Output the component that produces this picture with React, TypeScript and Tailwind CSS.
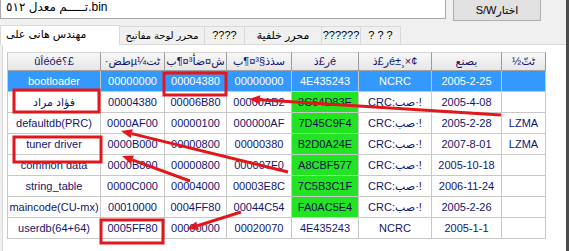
import React from 'react'

type Row = {
    name: string
    start: string
    size: string
    len: string
    crc: string
    flag: string
    date: string
    pack: string
    green: boolean
    selected?: boolean
}

const rows: Row[] = [
    { name: 'bootloader', start: '00000000', size: '00004380', len: '00000000', crc: '4E435243', flag: 'NCRC', date: '2005-2-25', pack: '', green: false, selected: true },
    { name: 'فؤاد مراد', start: '00004380', size: '00006B80', len: '00000AB2', crc: '3C64D83E', flag: 'CRC', date: '2005-4-08', pack: '', green: true },
    { name: 'defaultdb(PRC)', start: '0000AF00', size: '00000100', len: '000000AF', crc: '7D45C9F4', flag: 'CRC', date: '2005-2-28', pack: 'LZMA', green: true },
    { name: 'tuner driver', start: '0000B000', size: '00000800', len: '00000380', crc: 'B2D0A24E', flag: 'CRC', date: '2007-8-01', pack: 'LZMA', green: true },
    { name: 'common data', start: '0000B800', size: '00000800', len: '000007F0', crc: 'A8CBF577', flag: 'CRC', date: '2005-10-18', pack: '', green: true },
    { name: 'string_table', start: '0000C000', size: '00004000', len: '00003E8C', crc: '7C5B3C1F', flag: 'CRC', date: '2006-11-24', pack: '', green: true },
    { name: 'maincode(CU-mx)', start: '00010000', size: '0004FF80', len: '00044C54', crc: 'FA0AC5E4', flag: 'CRC', date: '2005-2-26', pack: '', green: true },
    { name: 'userdb(64+64)', start: '0005FF80', size: '00000000', len: '00020070', crc: '4E435243', flag: 'NCRC', date: '2005-1-1', pack: '', green: false },
]

// garbled column titles, kept as the app shows them
const headers = ['ûÎéóé؟£', '·طضµ¼ٹت', 'ش¤ضأ³¤¶ب', 'سذذ§³¤¶ب', 'ر£ذé', 'ر£ذé±¸×¢', 'بصنع', '½ٹتّ']

const tabs = [
    { t: 'محرر لوحة مفاتيح', w: 'w-[85px] text-[10px]' },
    { t: '????', w: 'w-[40px] text-[11px]' },
    { t: 'محرر خلفية', w: 'w-[77px] text-[11px]' },
    { t: '??????', w: 'w-[39px] text-[11px]' },
    { t: '? ? ?', w: 'w-[40px] text-[11px]' },
]

function Cell({ children, row, green }: { children: React.ReactNode; row: Row; green?: boolean }) {
    const bg = row.selected ? 'bg-[#3399ff] text-white' : green ? 'bg-[#22e422] text-[#10104a]' : 'bg-white text-[#14146e]'
    return (
        <div className={`h-[21px] flex items-center justify-center whitespace-nowrap overflow-hidden border-r border-b border-[#c8c8c8] ${bg}`}>
            {children}
        </div>
    )
}

function Arrow({ x1, y1, x2, y2 }: { x1: number; y1: number; x2: number; y2: number }) {
    // head at (x2, y2)
    const a = Math.atan2(y2 - y1, x2 - x1)
    const len = 11
    const w = 4.5
    const bx = x2 - len * Math.cos(a)
    const by = y2 - len * Math.sin(a)
    const p1 = `${bx + w * Math.sin(a)},${by - w * Math.cos(a)}`
    const p2 = `${bx - w * Math.sin(a)},${by + w * Math.cos(a)}`
    return (
        <g>
            <line x1={x1} y1={y1} x2={bx} y2={by} stroke="#e3171b" strokeWidth="3" />
            <polygon points={`${x2},${y2} ${p1} ${p2}`} fill="#e3171b" />
        </g>
    )
}

export default function App() {
    return (
        <div className="relative w-[569px] h-[251px] overflow-hidden bg-[#f0f0f0] font-['Liberation_Sans','DejaVu_Sans',sans-serif] text-[11px]">
            <div className="flex items-start mt-[-3px]">
                <div className="w-[446px] h-[22px] bg-white border border-[#a8a8a8] flex items-end pb-[2px] pl-[5px] text-[12px] text-black" dir="ltr">
                    تـــــم معدل ٥١٢.bin
                </div>
                <button className="ml-[7px] w-[88px] h-[24px] bg-[#e1e1e1] border border-[#adadad] text-[11px] text-black flex items-center justify-center pt-[3px]">
                    <span dir="ltr">S/Wاختار</span>
                </button>
            </div>

            <div className="flex items-end h-[23px]">
                <div className="w-[120px] h-[20px] bg-white border border-b-0 border-[#d9d9d9] flex items-center pl-[5px] pb-[2px] text-[11px] text-black relative z-10 mb-[-1px]">
                    مهندس هانى على
                </div>
                {tabs.map((t, i) => (
                    <div
                        key={i}
                        className={`${t.w} h-[18px] bg-[#f0f0f0] border border-b-0 border-l-0 border-[#d9d9d9] flex items-center justify-center whitespace-nowrap overflow-hidden text-black`}
                    >
                        {t.t}
                    </div>
                ))}
            </div>

            <div className="ml-[2px] mr-[2px] h-[210px] bg-white border border-[#d9d9d9] pt-[7px] pl-[4px]">
                <div className="grid grid-cols-[93px_64px_62px_65px_67px_73px_70px_44px] w-[538px] border-l border-[#c8c8c8]">
                    {headers.map((h, i) => (
                        <div
                            key={i}
                            className="h-[19px] flex items-center justify-center whitespace-nowrap overflow-hidden bg-[linear-gradient(#f7f7f7,#e6e6e6)] border-t border-b border-r border-t-[#d4d4d4] border-b-[#a0a0a0] border-r-[#9a9a9a] text-[#14146e]"
                        >
                            {h}
                        </div>
                    ))}
                    {rows.map((r, i) => (
                        <React.Fragment key={i}>
                            <Cell row={r}>{r.name}</Cell>
                            <Cell row={r}>{r.start}</Cell>
                            <Cell row={r}>{r.size}</Cell>
                            <Cell row={r}>{r.len}</Cell>
                            <Cell row={r} green={r.green}>{r.crc}</Cell>
                            <Cell row={r}>
                                {r.flag === 'CRC' ? <span dir="ltr">CRC:صب·!</span> : r.flag}
                            </Cell>
                            <Cell row={r}>{r.date}</Cell>
                            <Cell row={r}>{r.pack}</Cell>
                        </React.Fragment>
                    ))}
                </div>
            </div>

            <div className="absolute top-0 right-0 w-[3px] h-full bg-[#4a4a4a]" />

            <svg className="absolute inset-0 pointer-events-none" width="569" height="251">
                <rect x="164" y="73" width="62" height="22" fill="none" stroke="#e3171b" strokeWidth="3" />
                <rect x="14" y="90" width="85" height="22" fill="none" stroke="#e3171b" strokeWidth="3" />
                <rect x="14" y="137" width="87" height="25" fill="none" stroke="#e3171b" strokeWidth="3" />
                <rect x="101" y="220" width="62" height="23" fill="none" stroke="#e3171b" strokeWidth="3" />
                <Arrow x1={501} y1={115} x2={249} y2={99} />
                <Arrow x1={288} y1={172} x2={121} y2={131} />
                <Arrow x1={190} y1={181} x2={122} y2={156} />
                <Arrow x1={241} y1={212} x2={187} y2={229} />
            </svg>
        </div>
    )
}
